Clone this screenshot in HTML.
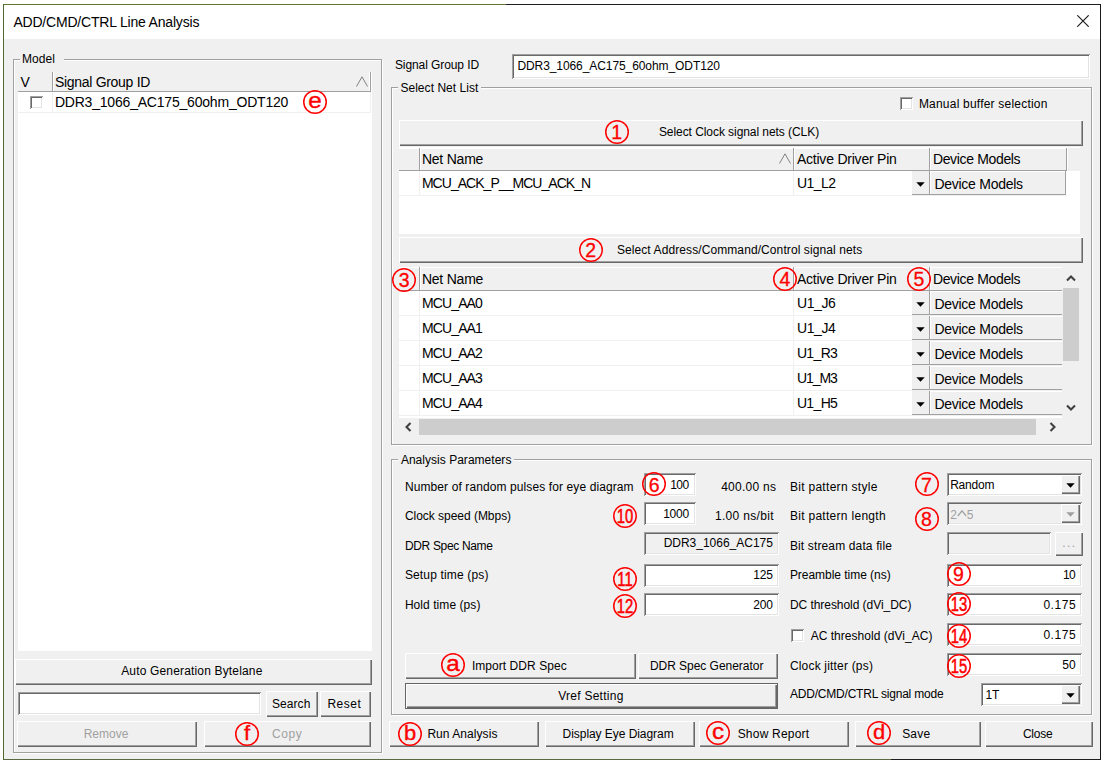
<!DOCTYPE html>
<html><head><meta charset="utf-8"><title>ADD/CMD/CTRL Line Analysis</title>
<style>
html,body{margin:0;padding:0;background:#fff;width:1105px;height:764px;overflow:hidden}
body{position:relative;font-family:"Liberation Sans", sans-serif;font-size:11px;color:#000}
body>div,body>span,body>svg{position:absolute;white-space:pre;display:block}
</style></head><body>
<div style="left:3px;top:4px;width:1098px;height:756px;background:#f0f0f0"></div>
<div style="left:3px;top:4px;width:1098px;height:1px;background:linear-gradient(to right,#5d7a30 0,#5d7a30 503px,#1e1e1e 503px)"></div>
<div style="left:3px;top:759px;width:1098px;height:1px;background:linear-gradient(to right,#5a6a40 0,#5a6a40 888px,#1e1e1e 888px)"></div>
<div style="left:3px;top:4px;width:1px;height:756px;background:#4e6a2c"></div>
<div style="left:1100px;top:4px;width:1px;height:756px;background:#1a1a1a"></div>
<div style="left:4px;top:5px;width:1096px;height:34px;background:#fff"></div>
<svg style="left:1077px;top:15px" width="12" height="12" viewBox="0 0 12 12"><path d="M0.3 0.3L11.7 11.7M11.7 0.3L0.3 11.7" stroke="#1a1a1a" stroke-width="1.15" fill="none"/></svg>
<div style="left:14px;top:60px;width:369px;height:694px;border:1px solid #fff;box-sizing:border-box"></div>
<div style="left:13px;top:59px;width:369px;height:694px;border:1px solid #a0a0a0;box-sizing:border-box"></div>
<div style="left:20px;top:57px;width:44px;height:5px;background:#f0f0f0"></div>
<div style="left:18px;top:72px;width:354px;height:579px;background:#fff"></div>
<div style="left:18px;top:72px;width:353px;height:20px;background:#f0f0f0;border-bottom:1px solid #a0a0a0;box-sizing:border-box"></div>
<div style="left:52px;top:72px;width:1px;height:19px;background:#a0a0a0"></div>
<div style="left:53px;top:72px;width:1px;height:19px;background:#fff"></div>
<div style="left:369px;top:72px;width:1px;height:19px;background:#fff"></div>
<div style="left:370px;top:72px;width:1px;height:19px;background:#a0a0a0"></div>
<svg style="left:356px;top:76px" width="12" height="11" viewBox="0 0 12 11"><path d="M0.5 10.5L6 0.8L11.5 10.5" stroke="#808080" stroke-width="1" fill="none"/></svg>
<div style="left:18px;top:112px;width:353px;height:1px;background:#f0f0f0"></div>
<div style="left:52px;top:92px;width:1px;height:21px;background:#f0f0f0"></div>
<div style="left:370px;top:92px;width:1px;height:21px;background:#f0f0f0"></div>
<div style="left:30px;top:96px;width:13px;height:13px;background:#fff;box-shadow:inset 1px 1px #a0a0a0,inset -1px -1px #fff,inset 2px 2px #696969,inset -2px -2px #e3e3e3;"></div>
<svg style="left:301.5px;top:89px" width="26" height="26" viewBox="0 0 26 26"><circle cx="13" cy="13" r="11.25" fill="none" stroke="#f00" stroke-width="1.5"/></svg>
<div style="left:294.5px;top:90.5px;width:40px;height:20px;line-height:20px;text-align:center;color:#f00;font-size:22px;transform:scaleX(1.1);-webkit-text-stroke:0.35px #f00">e</div>
<div style="left:15px;top:659px;width:357px;height:26px;background:#f0f0f0;box-shadow:inset 1px 1px #fff,inset -1px -1px #696969,inset -2px -2px #a0a0a0;"></div>
<div style="left:18px;top:692px;width:243px;height:23px;background:#fff;box-shadow:inset 1px 1px #a0a0a0,inset -1px -1px #fff,inset 2px 2px #696969,inset -2px -2px #e3e3e3;"></div>
<div style="left:266px;top:691px;width:52px;height:26px;background:#f0f0f0;box-shadow:inset 1px 1px #fff,inset -1px -1px #696969,inset -2px -2px #a0a0a0;"></div>
<div style="left:320px;top:691px;width:51px;height:26px;background:#f0f0f0;box-shadow:inset 1px 1px #fff,inset -1px -1px #696969,inset -2px -2px #a0a0a0;"></div>
<div style="left:17px;top:721px;width:180px;height:26px;background:#f0f0f0;box-shadow:inset 1px 1px #fff,inset -1px -1px #696969,inset -2px -2px #a0a0a0;"></div>
<div style="left:204px;top:721px;width:167px;height:26px;background:#f0f0f0;box-shadow:inset 1px 1px #fff,inset -1px -1px #696969,inset -2px -2px #a0a0a0;"></div>
<svg style="left:233.6px;top:721px" width="26" height="26" viewBox="0 0 26 26"><circle cx="13" cy="13" r="11.25" fill="none" stroke="#f00" stroke-width="1.5"/></svg>
<div style="left:226.6px;top:723.1px;width:40px;height:20px;line-height:20px;text-align:center;color:#f00;font-size:20px;transform:scaleX(1.1);-webkit-text-stroke:0.35px #f00">f</div>
<div style="left:512px;top:54px;width:578px;height:25px;background:#fff;box-shadow:inset 1px 1px #a0a0a0,inset -1px -1px #fff,inset 2px 2px #696969,inset -2px -2px #e3e3e3;"></div>
<div style="left:392px;top:88px;width:701px;height:358px;border:1px solid #fff;box-sizing:border-box"></div>
<div style="left:391px;top:87px;width:701px;height:358px;border:1px solid #a0a0a0;box-sizing:border-box"></div>
<div style="left:398px;top:85px;width:83px;height:5px;background:#f0f0f0"></div>
<div style="left:900px;top:97px;width:13px;height:13px;background:#fff;box-shadow:inset 1px 1px #a0a0a0,inset -1px -1px #fff,inset 2px 2px #696969,inset -2px -2px #e3e3e3;"></div>
<div style="left:399px;top:120px;width:684px;height:26px;background:#f0f0f0;box-shadow:inset 1px 1px #fff,inset -1px -1px #696969,inset -2px -2px #a0a0a0;"></div>
<svg style="left:603.75px;top:119px" width="26" height="26" viewBox="0 0 26 26"><circle cx="13" cy="13" r="11.25" fill="none" stroke="#f00" stroke-width="1.5"/></svg>
<div style="left:596.75px;top:122.3px;width:40px;height:20px;line-height:20px;text-align:center;color:#f00;font-size:19.5px;-webkit-text-stroke:0.3px #f00">1</div>
<div style="left:399px;top:147px;width:681px;height:87px;background:#fff"></div>
<div style="left:1067px;top:148px;width:13px;height:23px;background:#f0f0f0"></div>
<div style="left:399px;top:148px;width:668px;height:23px;background:#f0f0f0;border-bottom:1px solid #a0a0a0;border-top:1px solid #fff;box-sizing:border-box"></div>
<div style="left:419px;top:148px;width:1px;height:22px;background:#a0a0a0"></div>
<div style="left:420px;top:148px;width:1px;height:22px;background:#fff"></div>
<div style="left:793px;top:148px;width:1px;height:22px;background:#a0a0a0"></div>
<div style="left:794px;top:148px;width:1px;height:22px;background:#fff"></div>
<div style="left:929px;top:148px;width:1px;height:22px;background:#a0a0a0"></div>
<div style="left:930px;top:148px;width:1px;height:22px;background:#fff"></div>
<div style="left:1066px;top:148px;width:1px;height:22px;background:#a0a0a0"></div>
<div style="left:1067px;top:148px;width:1px;height:22px;background:#fff"></div>
<svg style="left:779px;top:153px" width="12" height="11" viewBox="0 0 12 11"><path d="M0.5 10.5L6 0.8L11.5 10.5" stroke="#808080" stroke-width="1" fill="none"/></svg>
<div style="left:399px;top:171px;width:668px;height:25px;background:#fff"></div>
<div style="left:399px;top:195px;width:668px;height:1px;background:#f0f0f0"></div>
<div style="left:419px;top:171px;width:1px;height:25px;background:#f0f0f0"></div>
<div style="left:793px;top:171px;width:1px;height:25px;background:#f0f0f0"></div>
<div style="left:912px;top:171px;width:18px;height:24px;background:#f0f0f0;box-shadow:inset -1px -1px #a0a0a0"></div>
<svg style="left:916.0px;top:181.5px" width="9" height="5" viewBox="0 0 9 5"><path d="M0.3 0.2h8.4L4.5 4.8z" fill="#000"/></svg>
<div style="left:930px;top:171px;width:136px;height:24px;background:#f0f0f0;box-shadow:inset -1px -1px #a0a0a0,inset 1px 1px #fff"></div>
<div style="left:399px;top:237px;width:684px;height:26px;background:#f0f0f0;box-shadow:inset 1px 1px #fff,inset -1px -1px #696969,inset -2px -2px #a0a0a0;"></div>
<svg style="left:577.7px;top:237px" width="26" height="26" viewBox="0 0 26 26"><circle cx="13" cy="13" r="11.25" fill="none" stroke="#f00" stroke-width="1.5"/></svg>
<div style="left:570.7px;top:240.3px;width:40px;height:20px;line-height:20px;text-align:center;color:#f00;font-size:19.5px;-webkit-text-stroke:0.3px #f00">2</div>
<div style="left:399px;top:267px;width:681px;height:169px;background:#fff"></div>
<div style="left:399px;top:267px;width:668px;height:24px;background:#f0f0f0;border-bottom:1px solid #a0a0a0;border-top:1px solid #fff;box-sizing:border-box"></div>
<div style="left:419px;top:267px;width:1px;height:23px;background:#a0a0a0"></div>
<div style="left:420px;top:267px;width:1px;height:23px;background:#fff"></div>
<div style="left:793px;top:267px;width:1px;height:23px;background:#a0a0a0"></div>
<div style="left:794px;top:267px;width:1px;height:23px;background:#fff"></div>
<div style="left:929px;top:267px;width:1px;height:23px;background:#a0a0a0"></div>
<div style="left:930px;top:267px;width:1px;height:23px;background:#fff"></div>
<div style="left:1066px;top:267px;width:1px;height:23px;background:#a0a0a0"></div>
<div style="left:1067px;top:267px;width:1px;height:23px;background:#fff"></div>
<div style="left:399px;top:291px;width:668px;height:25px;background:#fff"></div>
<div style="left:399px;top:315px;width:668px;height:1px;background:#f0f0f0"></div>
<div style="left:419px;top:291px;width:1px;height:25px;background:#f0f0f0"></div>
<div style="left:793px;top:291px;width:1px;height:25px;background:#f0f0f0"></div>
<div style="left:912px;top:291px;width:18px;height:24px;background:#f0f0f0;box-shadow:inset -1px -1px #a0a0a0"></div>
<svg style="left:916.0px;top:301.5px" width="9" height="5" viewBox="0 0 9 5"><path d="M0.3 0.2h8.4L4.5 4.8z" fill="#000"/></svg>
<div style="left:930px;top:291px;width:136px;height:24px;background:#f0f0f0;box-shadow:inset -1px -1px #a0a0a0,inset 1px 1px #fff"></div>
<div style="left:399px;top:316px;width:668px;height:25px;background:#fff"></div>
<div style="left:399px;top:340px;width:668px;height:1px;background:#f0f0f0"></div>
<div style="left:419px;top:316px;width:1px;height:25px;background:#f0f0f0"></div>
<div style="left:793px;top:316px;width:1px;height:25px;background:#f0f0f0"></div>
<div style="left:912px;top:316px;width:18px;height:24px;background:#f0f0f0;box-shadow:inset -1px -1px #a0a0a0"></div>
<svg style="left:916.0px;top:326.5px" width="9" height="5" viewBox="0 0 9 5"><path d="M0.3 0.2h8.4L4.5 4.8z" fill="#000"/></svg>
<div style="left:930px;top:316px;width:136px;height:24px;background:#f0f0f0;box-shadow:inset -1px -1px #a0a0a0,inset 1px 1px #fff"></div>
<div style="left:399px;top:341px;width:668px;height:25px;background:#fff"></div>
<div style="left:399px;top:365px;width:668px;height:1px;background:#f0f0f0"></div>
<div style="left:419px;top:341px;width:1px;height:25px;background:#f0f0f0"></div>
<div style="left:793px;top:341px;width:1px;height:25px;background:#f0f0f0"></div>
<div style="left:912px;top:341px;width:18px;height:24px;background:#f0f0f0;box-shadow:inset -1px -1px #a0a0a0"></div>
<svg style="left:916.0px;top:351.5px" width="9" height="5" viewBox="0 0 9 5"><path d="M0.3 0.2h8.4L4.5 4.8z" fill="#000"/></svg>
<div style="left:930px;top:341px;width:136px;height:24px;background:#f0f0f0;box-shadow:inset -1px -1px #a0a0a0,inset 1px 1px #fff"></div>
<div style="left:399px;top:366px;width:668px;height:25px;background:#fff"></div>
<div style="left:399px;top:390px;width:668px;height:1px;background:#f0f0f0"></div>
<div style="left:419px;top:366px;width:1px;height:25px;background:#f0f0f0"></div>
<div style="left:793px;top:366px;width:1px;height:25px;background:#f0f0f0"></div>
<div style="left:912px;top:366px;width:18px;height:24px;background:#f0f0f0;box-shadow:inset -1px -1px #a0a0a0"></div>
<svg style="left:916.0px;top:376.5px" width="9" height="5" viewBox="0 0 9 5"><path d="M0.3 0.2h8.4L4.5 4.8z" fill="#000"/></svg>
<div style="left:930px;top:366px;width:136px;height:24px;background:#f0f0f0;box-shadow:inset -1px -1px #a0a0a0,inset 1px 1px #fff"></div>
<div style="left:399px;top:391px;width:668px;height:25px;background:#fff"></div>
<div style="left:399px;top:415px;width:668px;height:1px;background:#f0f0f0"></div>
<div style="left:419px;top:391px;width:1px;height:25px;background:#f0f0f0"></div>
<div style="left:793px;top:391px;width:1px;height:25px;background:#f0f0f0"></div>
<div style="left:912px;top:391px;width:18px;height:24px;background:#f0f0f0;box-shadow:inset -1px -1px #a0a0a0"></div>
<svg style="left:916.0px;top:401.5px" width="9" height="5" viewBox="0 0 9 5"><path d="M0.3 0.2h8.4L4.5 4.8z" fill="#000"/></svg>
<div style="left:930px;top:391px;width:136px;height:24px;background:#f0f0f0;box-shadow:inset -1px -1px #a0a0a0,inset 1px 1px #fff"></div>
<div style="left:399px;top:416px;width:663px;height:2px;background:#fff"></div>
<div style="left:1062px;top:267px;width:18px;height:151px;background:#f0f0f0"></div>
<div style="left:1063px;top:288px;width:16px;height:73px;background:#cdcdcd"></div>
<svg style="left:1066px;top:275px" width="10" height="7" viewBox="0 0 10 7"><path d="M1 5.5L5 1.5L9 5.5" stroke="#404040" stroke-width="2.1" fill="none"/></svg>
<svg style="left:1066px;top:404px" width="10" height="7" viewBox="0 0 10 7"><path d="M1 1.5L5 5.5L9 1.5" stroke="#404040" stroke-width="2.1" fill="none"/></svg>
<div style="left:399px;top:418px;width:681px;height:18px;background:#f0f0f0"></div>
<div style="left:419px;top:419px;width:617px;height:16px;background:#cdcdcd"></div>
<svg style="left:405px;top:422px" width="7" height="10" viewBox="0 0 7 10"><path d="M5.5 1L1.5 5L5.5 9" stroke="#404040" stroke-width="2.1" fill="none"/></svg>
<svg style="left:1049px;top:422px" width="7" height="10" viewBox="0 0 7 10"><path d="M1.5 1L5.5 5L1.5 9" stroke="#404040" stroke-width="2.1" fill="none"/></svg>
<svg style="left:391.25px;top:267px" width="26" height="26" viewBox="0 0 26 26"><circle cx="13" cy="13" r="11.25" fill="none" stroke="#f00" stroke-width="1.5"/></svg>
<div style="left:384.25px;top:270.3px;width:40px;height:20px;line-height:20px;text-align:center;color:#f00;font-size:19.5px;-webkit-text-stroke:0.3px #f00">3</div>
<svg style="left:772px;top:266px" width="26" height="26" viewBox="0 0 26 26"><circle cx="13" cy="13" r="11.25" fill="none" stroke="#f00" stroke-width="1.5"/></svg>
<div style="left:765px;top:269.3px;width:40px;height:20px;line-height:20px;text-align:center;color:#f00;font-size:19.5px;-webkit-text-stroke:0.3px #f00">4</div>
<svg style="left:906px;top:265.5px" width="26" height="26" viewBox="0 0 26 26"><circle cx="13" cy="13" r="11.25" fill="none" stroke="#f00" stroke-width="1.5"/></svg>
<div style="left:899px;top:268.8px;width:40px;height:20px;line-height:20px;text-align:center;color:#f00;font-size:19.5px;-webkit-text-stroke:0.3px #f00">5</div>
<div style="left:392px;top:460px;width:701px;height:256px;border:1px solid #fff;box-sizing:border-box"></div>
<div style="left:391px;top:459px;width:701px;height:256px;border:1px solid #a0a0a0;box-sizing:border-box"></div>
<div style="left:398px;top:457px;width:116px;height:5px;background:#f0f0f0"></div>
<div style="left:644px;top:473px;width:52px;height:23px;background:#fff;box-shadow:inset 1px 1px #a0a0a0,inset -1px -1px #fff,inset 2px 2px #696969,inset -2px -2px #e3e3e3;"></div>
<div style="left:644px;top:502px;width:52px;height:23px;background:#fff;box-shadow:inset 1px 1px #a0a0a0,inset -1px -1px #fff,inset 2px 2px #696969,inset -2px -2px #e3e3e3;"></div>
<div style="left:644px;top:532px;width:135px;height:23px;background:#f0f0f0;box-shadow:inset 1px 1px #a0a0a0,inset -1px -1px #fff,inset 2px 2px #696969,inset -2px -2px #e3e3e3;"></div>
<div style="left:644px;top:564px;width:135px;height:23px;background:#fff;box-shadow:inset 1px 1px #a0a0a0,inset -1px -1px #fff,inset 2px 2px #696969,inset -2px -2px #e3e3e3;"></div>
<div style="left:644px;top:593px;width:135px;height:23px;background:#fff;box-shadow:inset 1px 1px #a0a0a0,inset -1px -1px #fff,inset 2px 2px #696969,inset -2px -2px #e3e3e3;"></div>
<div style="left:947px;top:473px;width:135px;height:23px;background:#fff;box-shadow:inset 1px 1px #a0a0a0,inset -1px -1px #fff,inset 2px 2px #696969,inset -2px -2px #e3e3e3;"></div>
<div style="left:1061px;top:475px;width:19px;height:19px;background:#f0f0f0;box-shadow:inset 1px 1px #fff,inset -1px -1px #696969,inset -2px -2px #a0a0a0;"></div>
<svg style="left:1066.0px;top:483.0px" width="9" height="5" viewBox="0 0 9 5"><path d="M0.3 0.2h8.4L4.5 4.8z" fill="#000"/></svg>
<div style="left:947px;top:502px;width:135px;height:23px;background:#f0f0f0;box-shadow:inset 1px 1px #a0a0a0,inset -1px -1px #fff,inset 2px 2px #696969,inset -2px -2px #e3e3e3;"></div>
<div style="left:1061px;top:504px;width:19px;height:19px;background:#f0f0f0;box-shadow:inset 1px 1px #fff,inset -1px -1px #696969,inset -2px -2px #a0a0a0;"></div>
<svg style="left:1066.0px;top:512.0px" width="9" height="5" viewBox="0 0 9 5"><path d="M0.3 0.2h8.4L4.5 4.8z" fill="#a0a0a0"/></svg>
<svg style="left:957px;top:510px" width="10" height="7" viewBox="0 0 10 7"><path d="M0.8 6L5 0.8L9.2 6" stroke="#a0a0a0" stroke-width="1.2" fill="none"/></svg>
<div style="left:947px;top:532px;width:104px;height:23px;background:#f0f0f0;box-shadow:inset 1px 1px #a0a0a0,inset -1px -1px #fff,inset 2px 2px #696969,inset -2px -2px #e3e3e3;"></div>
<div style="left:1055px;top:532px;width:28px;height:24px;background:#f0f0f0;box-shadow:inset 1px 1px #fff,inset -1px -1px #696969,inset -2px -2px #a0a0a0;"></div>
<div style="left:947px;top:564px;width:135px;height:23px;background:#fff;box-shadow:inset 1px 1px #a0a0a0,inset -1px -1px #fff,inset 2px 2px #696969,inset -2px -2px #e3e3e3;"></div>
<div style="left:947px;top:593px;width:135px;height:23px;background:#fff;box-shadow:inset 1px 1px #a0a0a0,inset -1px -1px #fff,inset 2px 2px #696969,inset -2px -2px #e3e3e3;"></div>
<div style="left:947px;top:623px;width:135px;height:23px;background:#fff;box-shadow:inset 1px 1px #a0a0a0,inset -1px -1px #fff,inset 2px 2px #696969,inset -2px -2px #e3e3e3;"></div>
<div style="left:947px;top:653px;width:135px;height:23px;background:#fff;box-shadow:inset 1px 1px #a0a0a0,inset -1px -1px #fff,inset 2px 2px #696969,inset -2px -2px #e3e3e3;"></div>
<div style="left:981px;top:683px;width:101px;height:23px;background:#fff;box-shadow:inset 1px 1px #a0a0a0,inset -1px -1px #fff,inset 2px 2px #696969,inset -2px -2px #e3e3e3;"></div>
<div style="left:1061px;top:685px;width:19px;height:19px;background:#f0f0f0;box-shadow:inset 1px 1px #fff,inset -1px -1px #696969,inset -2px -2px #a0a0a0;"></div>
<svg style="left:1066.0px;top:693.0px" width="9" height="5" viewBox="0 0 9 5"><path d="M0.3 0.2h8.4L4.5 4.8z" fill="#000"/></svg>
<div style="left:791px;top:629px;width:13px;height:13px;background:#fff;box-shadow:inset 1px 1px #a0a0a0,inset -1px -1px #fff,inset 2px 2px #696969,inset -2px -2px #e3e3e3;"></div>
<div style="left:405px;top:653px;width:231px;height:26px;background:#f0f0f0;box-shadow:inset 1px 1px #fff,inset -1px -1px #696969,inset -2px -2px #a0a0a0;"></div>
<div style="left:638px;top:653px;width:140px;height:26px;background:#f0f0f0;box-shadow:inset 1px 1px #fff,inset -1px -1px #696969,inset -2px -2px #a0a0a0;"></div>
<div style="left:405px;top:683px;width:373px;height:26px;background:#f0f0f0;box-shadow:inset 0 0 0 1px #646464,inset 2px 2px #fff,inset -2px -2px #696969,inset -3px -3px #a0a0a0;"></div>
<svg style="left:641.25px;top:471.25px" width="26" height="26" viewBox="0 0 26 26"><circle cx="13" cy="13" r="11.25" fill="none" stroke="#f00" stroke-width="1.5"/></svg>
<div style="left:634.25px;top:474.55px;width:40px;height:20px;line-height:20px;text-align:center;color:#f00;font-size:19.5px;-webkit-text-stroke:0.3px #f00">6</div>
<svg style="left:913.5px;top:471.25px" width="26" height="26" viewBox="0 0 26 26"><circle cx="13" cy="13" r="11.25" fill="none" stroke="#f00" stroke-width="1.5"/></svg>
<div style="left:906.5px;top:474.55px;width:40px;height:20px;line-height:20px;text-align:center;color:#f00;font-size:19.5px;-webkit-text-stroke:0.3px #f00">7</div>
<svg style="left:913.5px;top:505.75px" width="26" height="26" viewBox="0 0 26 26"><circle cx="13" cy="13" r="11.25" fill="none" stroke="#f00" stroke-width="1.5"/></svg>
<div style="left:906.5px;top:509.05px;width:40px;height:20px;line-height:20px;text-align:center;color:#f00;font-size:19.5px;-webkit-text-stroke:0.3px #f00">8</div>
<svg style="left:945.5px;top:561px" width="26" height="26" viewBox="0 0 26 26"><circle cx="13" cy="13" r="11.25" fill="none" stroke="#f00" stroke-width="1.5"/></svg>
<div style="left:938.5px;top:564.3px;width:40px;height:20px;line-height:20px;text-align:center;color:#f00;font-size:19.5px;-webkit-text-stroke:0.3px #f00">9</div>
<svg style="left:612px;top:503px" width="26" height="26" viewBox="0 0 26 26"><circle cx="13" cy="13" r="11.25" fill="none" stroke="#f00" stroke-width="1.5"/></svg>
<div style="left:605px;top:506.3px;width:40px;height:20px;line-height:20px;text-align:center;color:#f00;font-size:19.5px;transform:scaleX(0.76);-webkit-text-stroke:0.55px #f00">10</div>
<svg style="left:611.5px;top:566px" width="26" height="26" viewBox="0 0 26 26"><circle cx="13" cy="13" r="11.25" fill="none" stroke="#f00" stroke-width="1.5"/></svg>
<div style="left:604.5px;top:569.3px;width:40px;height:20px;line-height:20px;text-align:center;color:#f00;font-size:19.5px;transform:scaleX(0.76);-webkit-text-stroke:0.55px #f00">11</div>
<svg style="left:611.5px;top:592.5px" width="26" height="26" viewBox="0 0 26 26"><circle cx="13" cy="13" r="11.25" fill="none" stroke="#f00" stroke-width="1.5"/></svg>
<div style="left:604.5px;top:595.8px;width:40px;height:20px;line-height:20px;text-align:center;color:#f00;font-size:19.5px;transform:scaleX(0.76);-webkit-text-stroke:0.55px #f00">12</div>
<svg style="left:945.5px;top:590.75px" width="26" height="26" viewBox="0 0 26 26"><circle cx="13" cy="13" r="11.25" fill="none" stroke="#f00" stroke-width="1.5"/></svg>
<div style="left:938.5px;top:594.05px;width:40px;height:20px;line-height:20px;text-align:center;color:#f00;font-size:19.5px;transform:scaleX(0.76);-webkit-text-stroke:0.55px #f00">13</div>
<svg style="left:945.5px;top:622.5px" width="26" height="26" viewBox="0 0 26 26"><circle cx="13" cy="13" r="11.25" fill="none" stroke="#f00" stroke-width="1.5"/></svg>
<div style="left:938.5px;top:625.8px;width:40px;height:20px;line-height:20px;text-align:center;color:#f00;font-size:19.5px;transform:scaleX(0.76);-webkit-text-stroke:0.55px #f00">14</div>
<svg style="left:945.5px;top:653px" width="26" height="26" viewBox="0 0 26 26"><circle cx="13" cy="13" r="11.25" fill="none" stroke="#f00" stroke-width="1.5"/></svg>
<div style="left:938.5px;top:656.3px;width:40px;height:20px;line-height:20px;text-align:center;color:#f00;font-size:19.5px;transform:scaleX(0.76);-webkit-text-stroke:0.55px #f00">15</div>
<svg style="left:440px;top:652px" width="26" height="26" viewBox="0 0 26 26"><circle cx="13" cy="13" r="11.25" fill="none" stroke="#f00" stroke-width="1.5"/></svg>
<div style="left:433px;top:653.5px;width:40px;height:20px;line-height:20px;text-align:center;color:#f00;font-size:22px;transform:scaleX(1.1);-webkit-text-stroke:0.35px #f00">a</div>
<div style="left:389px;top:721px;width:150px;height:26px;background:#f0f0f0;box-shadow:inset 1px 1px #fff,inset -1px -1px #696969,inset -2px -2px #a0a0a0;"></div>
<div style="left:545px;top:721px;width:150px;height:26px;background:#f0f0f0;box-shadow:inset 1px 1px #fff,inset -1px -1px #696969,inset -2px -2px #a0a0a0;"></div>
<div style="left:699px;top:721px;width:150px;height:26px;background:#f0f0f0;box-shadow:inset 1px 1px #fff,inset -1px -1px #696969,inset -2px -2px #a0a0a0;"></div>
<div style="left:855px;top:721px;width:126px;height:26px;background:#f0f0f0;box-shadow:inset 1px 1px #fff,inset -1px -1px #696969,inset -2px -2px #a0a0a0;"></div>
<div style="left:985px;top:721px;width:108px;height:26px;background:#f0f0f0;box-shadow:inset 1px 1px #fff,inset -1px -1px #696969,inset -2px -2px #a0a0a0;"></div>
<svg style="left:397.2px;top:721px" width="26" height="26" viewBox="0 0 26 26"><circle cx="13" cy="13" r="11.25" fill="none" stroke="#f00" stroke-width="1.5"/></svg>
<div style="left:390.2px;top:723.1px;width:40px;height:20px;line-height:20px;text-align:center;color:#f00;font-size:20px;transform:scaleX(1.1);-webkit-text-stroke:0.35px #f00">b</div>
<svg style="left:705px;top:720px" width="26" height="26" viewBox="0 0 26 26"><circle cx="13" cy="13" r="11.25" fill="none" stroke="#f00" stroke-width="1.5"/></svg>
<div style="left:698px;top:721.5px;width:40px;height:20px;line-height:20px;text-align:center;color:#f00;font-size:22px;transform:scaleX(1.1);-webkit-text-stroke:0.35px #f00">c</div>
<svg style="left:866.2px;top:720px" width="26" height="26" viewBox="0 0 26 26"><circle cx="13" cy="13" r="11.25" fill="none" stroke="#f00" stroke-width="1.5"/></svg>
<div style="left:859.2px;top:722.1px;width:40px;height:20px;line-height:20px;text-align:center;color:#f00;font-size:20px;transform:scaleX(1.1);-webkit-text-stroke:0.35px #f00">d</div>
<span id="t0" style="left:13.40px;top:15.25px;font-size:14px;line-height:1;letter-spacing:-0.195px;color:#000;font-weight:normal">ADD/CMD/CTRL Line Analysis</span>
<span id="t1" style="left:21.90px;top:53.34px;font-size:12px;line-height:1;letter-spacing:0.078px;color:#000;font-weight:normal">Model</span>
<span id="t2" style="left:20.40px;top:74.95px;font-size:14px;line-height:1;letter-spacing:-0.344px;color:#000;font-weight:normal">V</span>
<span id="t3" style="left:54.90px;top:74.95px;font-size:14px;line-height:1;letter-spacing:-0.294px;color:#000;font-weight:normal">Signal Group ID</span>
<span id="t4" style="left:54.90px;top:95.05px;font-size:14px;line-height:1;letter-spacing:-0.201px;color:#000;font-weight:normal">DDR3_1066_AC175_60ohm_ODT120</span>
<span id="t5" style="left:121.15px;top:665.34px;font-size:12px;line-height:1;letter-spacing:0.166px;color:#000;font-weight:normal">Auto Generation Bytelane</span>
<span id="t6" style="left:271.90px;top:697.84px;font-size:12px;line-height:1;letter-spacing:0.094px;color:#000;font-weight:normal">Search</span>
<span id="t7" style="left:327.40px;top:697.84px;font-size:12px;line-height:1;letter-spacing:0.535px;color:#000;font-weight:normal">Reset</span>
<span id="t8" style="left:83.65px;top:727.84px;font-size:12px;line-height:1;letter-spacing:0.013px;color:#a0a0a0;font-weight:normal">Remove</span>
<span id="t9" style="left:271.90px;top:727.84px;font-size:12px;line-height:1;letter-spacing:0.578px;color:#a0a0a0;font-weight:normal">Copy</span>
<span id="t10" style="left:394.90px;top:58.59px;font-size:12px;line-height:1;letter-spacing:-0.081px;color:#000;font-weight:normal">Signal Group ID</span>
<span id="t11" style="left:517.40px;top:59.84px;font-size:12px;line-height:1;letter-spacing:-0.081px;color:#000;font-weight:normal">DDR3_1066_AC175_60ohm_ODT120</span>
<span id="t12" style="left:400.40px;top:82.34px;font-size:12px;line-height:1;letter-spacing:0.045px;color:#000;font-weight:normal">Select Net List</span>
<span id="t13" style="left:918.90px;top:97.84px;font-size:12px;line-height:1;letter-spacing:0.211px;color:#000;font-weight:normal">Manual buffer selection</span>
<span id="t14" style="left:658.90px;top:125.84px;font-size:12px;line-height:1;letter-spacing:-0.063px;color:#000;font-weight:normal">Select Clock signal nets (CLK)</span>
<span id="t15" style="left:421.90px;top:151.85px;font-size:14px;line-height:1;letter-spacing:-0.219px;color:#000;font-weight:normal">Net Name</span>
<span id="t16" style="left:796.90px;top:151.85px;font-size:14px;line-height:1;letter-spacing:-0.217px;color:#000;font-weight:normal">Active Driver Pin</span>
<span id="t17" style="left:932.90px;top:151.85px;font-size:14px;line-height:1;letter-spacing:-0.340px;color:#000;font-weight:normal">Device Models</span>
<span id="t18" style="left:421.90px;top:176.05px;font-size:14px;line-height:1;letter-spacing:-0.961px;color:#000;font-weight:normal">MCU_ACK_P__MCU_ACK_N</span>
<span id="t19" style="left:796.90px;top:176.05px;font-size:14px;line-height:1;letter-spacing:-0.504px;color:#000;font-weight:normal">U1_L2</span>
<span id="t20" style="left:934.40px;top:176.55px;font-size:14px;line-height:1;letter-spacing:-0.257px;color:#000;font-weight:normal">Device Models</span>
<span id="t21" style="left:616.90px;top:243.84px;font-size:12px;line-height:1;letter-spacing:0.093px;color:#000;font-weight:normal">Select Address/Command/Control signal nets</span>
<span id="t22" style="left:421.90px;top:272.25px;font-size:14px;line-height:1;letter-spacing:-0.219px;color:#000;font-weight:normal">Net Name</span>
<span id="t23" style="left:796.90px;top:272.25px;font-size:14px;line-height:1;letter-spacing:-0.217px;color:#000;font-weight:normal">Active Driver Pin</span>
<span id="t24" style="left:932.90px;top:272.25px;font-size:14px;line-height:1;letter-spacing:-0.340px;color:#000;font-weight:normal">Device Models</span>
<span id="t25" style="left:421.90px;top:296.25px;font-size:14px;line-height:1;letter-spacing:-0.857px;color:#000;font-weight:normal">MCU_AA0</span>
<span id="t26" style="left:796.90px;top:296.25px;font-size:14px;line-height:1;letter-spacing:-0.367px;color:#000;font-weight:normal">U1_J6</span>
<span id="t27" style="left:934.40px;top:297.00px;font-size:14px;line-height:1;letter-spacing:-0.257px;color:#000;font-weight:normal">Device Models</span>
<span id="t28" style="left:421.90px;top:321.25px;font-size:14px;line-height:1;letter-spacing:-0.857px;color:#000;font-weight:normal">MCU_AA1</span>
<span id="t29" style="left:796.90px;top:321.25px;font-size:14px;line-height:1;letter-spacing:-0.367px;color:#000;font-weight:normal">U1_J4</span>
<span id="t30" style="left:934.40px;top:322.00px;font-size:14px;line-height:1;letter-spacing:-0.257px;color:#000;font-weight:normal">Device Models</span>
<span id="t31" style="left:421.90px;top:346.25px;font-size:14px;line-height:1;letter-spacing:-0.857px;color:#000;font-weight:normal">MCU_AA2</span>
<span id="t32" style="left:796.90px;top:346.25px;font-size:14px;line-height:1;letter-spacing:-0.648px;color:#000;font-weight:normal">U1_R3</span>
<span id="t33" style="left:934.40px;top:347.00px;font-size:14px;line-height:1;letter-spacing:-0.257px;color:#000;font-weight:normal">Device Models</span>
<span id="t34" style="left:421.90px;top:371.25px;font-size:14px;line-height:1;letter-spacing:-0.857px;color:#000;font-weight:normal">MCU_AA3</span>
<span id="t35" style="left:796.90px;top:371.25px;font-size:14px;line-height:1;letter-spacing:-1.035px;color:#000;font-weight:normal">U1_M3</span>
<span id="t36" style="left:934.40px;top:372.00px;font-size:14px;line-height:1;letter-spacing:-0.257px;color:#000;font-weight:normal">Device Models</span>
<span id="t37" style="left:421.90px;top:396.25px;font-size:14px;line-height:1;letter-spacing:-0.857px;color:#000;font-weight:normal">MCU_AA4</span>
<span id="t38" style="left:796.90px;top:396.25px;font-size:14px;line-height:1;letter-spacing:-0.648px;color:#000;font-weight:normal">U1_H5</span>
<span id="t39" style="left:934.40px;top:397.00px;font-size:14px;line-height:1;letter-spacing:-0.257px;color:#000;font-weight:normal">Device Models</span>
<span id="t40" style="left:400.90px;top:454.34px;font-size:12px;line-height:1;letter-spacing:0.025px;color:#000;font-weight:normal">Analysis Parameters</span>
<span id="t41" style="left:404.90px;top:481.09px;font-size:12px;line-height:1;letter-spacing:0.104px;color:#000;font-weight:normal">Number of random pulses for eye diagram</span>
<span id="t42" style="left:404.90px;top:510.34px;font-size:12px;line-height:1;letter-spacing:-0.028px;color:#000;font-weight:normal">Clock speed (Mbps)</span>
<span id="t43" style="left:404.90px;top:539.84px;font-size:12px;line-height:1;letter-spacing:-0.336px;color:#000;font-weight:normal">DDR Spec Name</span>
<span id="t44" style="left:404.90px;top:569.34px;font-size:12px;line-height:1;letter-spacing:0.152px;color:#000;font-weight:normal">Setup time (ps)</span>
<span id="t45" style="left:404.90px;top:598.59px;font-size:12px;line-height:1;letter-spacing:0.062px;color:#000;font-weight:normal">Hold time (ps)</span>
<span id="t46" style="left:670.15px;top:478.59px;font-size:12px;line-height:1;letter-spacing:-0.516px;color:#000;font-weight:normal">100</span>
<span id="t47" style="left:663.15px;top:507.84px;font-size:12px;line-height:1;letter-spacing:-0.234px;color:#000;font-weight:normal">1000</span>
<span id="t48" style="left:721.15px;top:481.09px;font-size:12px;line-height:1;letter-spacing:0.254px;color:#000;font-weight:normal">400.00 ns</span>
<span id="t49" style="left:714.90px;top:510.34px;font-size:12px;line-height:1;letter-spacing:0.338px;color:#000;font-weight:normal">1.00 ns/bit</span>
<span id="t50" style="left:663.65px;top:537.34px;font-size:12px;line-height:1;letter-spacing:-0.011px;color:#000;font-weight:normal">DDR3_1066_AC175</span>
<span id="t51" style="left:753.15px;top:569.09px;font-size:12px;line-height:1;letter-spacing:-0.141px;color:#000;font-weight:normal">125</span>
<span id="t52" style="left:753.15px;top:598.59px;font-size:12px;line-height:1;letter-spacing:-0.141px;color:#000;font-weight:normal">200</span>
<span id="t53" style="left:789.90px;top:481.09px;font-size:12px;line-height:1;letter-spacing:0.299px;color:#000;font-weight:normal">Bit pattern style</span>
<span id="t54" style="left:789.90px;top:510.34px;font-size:12px;line-height:1;letter-spacing:0.295px;color:#000;font-weight:normal">Bit pattern length</span>
<span id="t55" style="left:789.90px;top:539.84px;font-size:12px;line-height:1;letter-spacing:0.138px;color:#000;font-weight:normal">Bit stream data file</span>
<span id="t56" style="left:789.90px;top:569.34px;font-size:12px;line-height:1;letter-spacing:-0.037px;color:#000;font-weight:normal">Preamble time (ns)</span>
<span id="t57" style="left:789.90px;top:598.59px;font-size:12px;line-height:1;letter-spacing:-0.050px;color:#000;font-weight:normal">DC threshold (dVi_DC)</span>
<span id="t58" style="left:810.65px;top:630.34px;font-size:12px;line-height:1;letter-spacing:0.029px;color:#000;font-weight:normal">AC threshold (dVi_AC)</span>
<span id="t59" style="left:789.90px;top:660.34px;font-size:12px;line-height:1;letter-spacing:0.187px;color:#000;font-weight:normal">Clock jitter (ps)</span>
<span id="t60" style="left:789.90px;top:687.84px;font-size:12px;line-height:1;letter-spacing:-0.196px;color:#000;font-weight:normal">ADD/CMD/CTRL signal mode</span>
<span id="t61" style="left:950.15px;top:479.34px;font-size:12px;line-height:1;letter-spacing:-0.222px;color:#000;font-weight:normal">Random</span>
<span id="t62" style="left:950.15px;top:509.34px;font-size:12px;line-height:1;letter-spacing:-0.138px;color:#a0a0a0;font-weight:normal">2</span>
<span id="t63" style="left:966.70px;top:509.34px;font-size:12px;line-height:1;letter-spacing:0.312px;color:#a0a0a0;font-weight:normal">5</span>
<span id="t64" style="left:985.40px;top:689.09px;font-size:12px;line-height:1;letter-spacing:-0.016px;color:#000;font-weight:normal">1T</span>
<span id="t65" style="left:1062.90px;top:569.34px;font-size:12px;line-height:1;letter-spacing:-0.609px;color:#000;font-weight:normal">10</span>
<span id="t66" style="left:1043.40px;top:598.59px;font-size:12px;line-height:1;letter-spacing:0.555px;color:#000;font-weight:normal">0.175</span>
<span id="t67" style="left:1043.40px;top:629.09px;font-size:12px;line-height:1;letter-spacing:0.555px;color:#000;font-weight:normal">0.175</span>
<span id="t68" style="left:1062.15px;top:659.09px;font-size:12px;line-height:1;letter-spacing:0.141px;color:#000;font-weight:normal">50</span>
<span id="t69" style="left:1062.30px;top:536.84px;font-size:12px;line-height:1;letter-spacing:1.342px;color:#a0a0a0;font-weight:normal">...</span>
<span id="t70" style="left:471.90px;top:659.84px;font-size:12px;line-height:1;letter-spacing:0.051px;color:#000;font-weight:normal">Import DDR Spec</span>
<span id="t71" style="left:649.90px;top:659.84px;font-size:12px;line-height:1;letter-spacing:-0.032px;color:#000;font-weight:normal">DDR Spec Generator</span>
<span id="t72" style="left:558.15px;top:689.84px;font-size:12px;line-height:1;letter-spacing:0.271px;color:#000;font-weight:normal">Vref Setting</span>
<span id="t73" style="left:427.40px;top:727.84px;font-size:12px;line-height:1;letter-spacing:0.057px;color:#000;font-weight:normal">Run Analysis</span>
<span id="t74" style="left:562.60px;top:727.84px;font-size:12px;line-height:1;letter-spacing:-0.055px;color:#000;font-weight:normal">Display Eye Diagram</span>
<span id="t75" style="left:737.65px;top:727.84px;font-size:12px;line-height:1;letter-spacing:0.212px;color:#000;font-weight:normal">Show Report</span>
<span id="t76" style="left:902.15px;top:727.84px;font-size:12px;line-height:1;letter-spacing:0.214px;color:#000;font-weight:normal">Save</span>
<span id="t77" style="left:1022.90px;top:727.84px;font-size:12px;line-height:1;letter-spacing:-0.234px;color:#000;font-weight:normal">Close</span>
</body></html>
